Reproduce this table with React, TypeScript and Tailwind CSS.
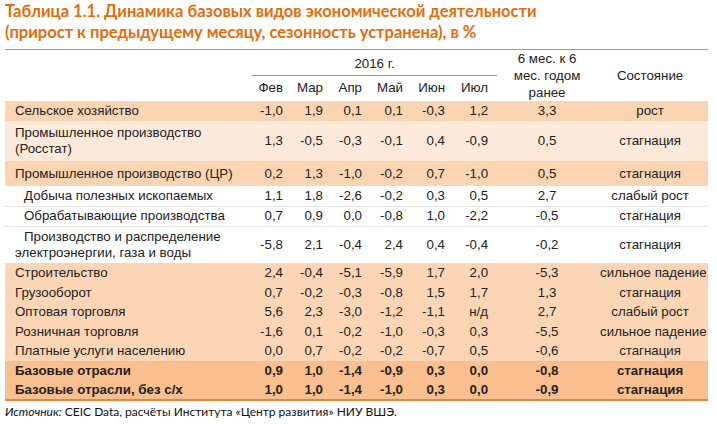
import React from 'react';

type Row = {
  label: string[];
  vals: string[];
  half: string;
  state: string;
  bg: string;
  h: string;
  indent?: boolean;
  bold?: boolean;
  line?: boolean;
};

const rows: Row[] = [
  { label: ['Сельское хозяйство'], vals: ['-1,0', '1,9', '0,1', '0,1', '-0,3', '1,2'], half: '3,3', state: 'рост', bg: 'bg-[#fbd4b2]', h: 'h-[20px]' },
  { label: ['Промышленное производство', '(Росстат)'], vals: ['1,3', '-0,5', '-0,3', '-0,1', '0,4', '-0,9'], half: '0,5', state: 'стагнация', bg: 'bg-[#fde9d9]', h: 'h-[40px]' },
  { label: ['Промышленное производство (ЦР)'], vals: ['0,2', '1,3', '-1,0', '-0,2', '0,7', '-1,0'], half: '0,5', state: 'стагнация', bg: 'bg-[#fbd4b2]', h: 'h-[25px]' },
  { label: ['Добыча полезных ископаемых'], vals: ['1,1', '1,8', '-2,6', '-0,2', '0,3', '0,5'], half: '2,7', state: 'слабый рост', bg: 'bg-white', h: 'h-[20px]', indent: true, line: true },
  { label: ['Обрабатывающие производства'], vals: ['0,7', '0,9', '0,0', '-0,8', '1,0', '-2,2'], half: '-0,5', state: 'стагнация', bg: 'bg-white', h: 'h-[20px]', indent: true, line: true },
  { label: ['Производство и распределение', 'электроэнергии, газа и воды'], vals: ['-5,8', '2,1', '-0,4', '2,4', '0,4', '-0,4'], half: '-0,2', state: 'стагнация', bg: 'bg-white', h: 'h-[37px]', indent: true },
  { label: ['Строительство'], vals: ['2,4', '-0,4', '-5,1', '-5,9', '1,7', '2,0'], half: '-5,3', state: 'сильное падение', bg: 'bg-[#fcd5b4]', h: 'h-[20px]' },
  { label: ['Грузооборот'], vals: ['0,7', '-0,2', '-0,3', '-0,8', '1,5', '1,7'], half: '1,3', state: 'стагнация', bg: 'bg-[#fcd5b4]', h: 'h-[19px]' },
  { label: ['Оптовая торговля'], vals: ['5,6', '2,3', '-3,0', '-1,2', '-1,1', 'н/д'], half: '2,7', state: 'слабый рост', bg: 'bg-[#fcd5b4]', h: 'h-[20px]' },
  { label: ['Розничная торговля'], vals: ['-1,6', '0,1', '-0,2', '-1,0', '-0,3', '0,3'], half: '-5,5', state: 'сильное падение', bg: 'bg-[#fcd5b4]', h: 'h-[19px]' },
  { label: ['Платные услуги населению'], vals: ['0,0', '0,7', '-0,2', '-0,2', '-0,7', '0,5'], half: '-0,6', state: 'стагнация', bg: 'bg-[#fcd5b4]', h: 'h-[20px]' },
  { label: ['Базовые отрасли'], vals: ['0,9', '1,0', '-1,4', '-0,9', '0,3', '0,0'], half: '-0,8', state: 'стагнация', bg: 'bg-[#fabf8f]', h: 'h-[19px]', bold: true },
  { label: ['Базовые отрасли, без с/х'], vals: ['1,0', '1,0', '-1,4', '-1,0', '0,3', '0,0'], half: '-0,9', state: 'стагнация', bg: 'bg-[#fabf8f]', h: 'h-[20px]', bold: true },
];

const months = ['Фев', 'Мар', 'Апр', 'Май', 'Июн', 'Июл'];
const monthW = ['w-[40px]', 'w-[40px]', 'w-[39px]', 'w-[41px]', 'w-[42px]', 'w-[43px]'];

export default function App() {
  return (
    <div className="w-[717px] h-[424px] bg-white overflow-hidden px-[5px] pt-[1px]">
      <div className="font-['Lato',sans-serif] font-bold text-[16.5px] leading-[21px] text-[#e46c0a]">
        <div>Таблица 1.1. Динамика базовых видов экономической деятельности</div>
        <div>(прирост к предыдущему месяцу, сезонность устранена), в %</div>
      </div>

      <table className="mt-[6px] w-[703px] table-fixed border-collapse font-['Liberation_Sans',Arial,sans-serif] text-[13.3px] text-[#222]">
        <colgroup>
          <col className="w-[239px]" />
          {monthW.map((w, i) => (
            <col key={i} className={w} />
          ))}
          <col className="w-[111px]" />
          <col className="w-[108px]" />
        </colgroup>
        <thead>
          <tr className="h-[23px] border-t border-[#e0893c]">
            <th rowSpan={2} />
            <th colSpan={6} className="p-0 font-normal align-bottom">
              <div className="ml-[8px] w-[245px] border-b border-[#e0893c] pb-[3px] text-center leading-[16px]">
                2016 г.
              </div>
            </th>
            <th rowSpan={2} className="p-0 pl-[5px] font-normal text-center leading-[17px] align-middle">
              6 мес. к 6
              <br />
              мес. годом
              <br />
              ранее
            </th>
            <th rowSpan={2} className="p-0 pr-[8px] font-normal text-center align-middle">
              Состояние
            </th>
          </tr>
          <tr className="h-[22px]">
            {months.map((m) => (
              <th key={m} className="p-0 pr-[1px] font-normal text-right align-middle">
                {m}
              </th>
            ))}
          </tr>
        </thead>
        <tbody>
          {rows.map((r, i) => (
            <tr
              key={i}
              className={`${r.bg} ${r.h} ${r.bold ? 'font-bold' : ''} ${r.line ? 'border-b border-[#e6e6e6]' : ''} ${i === rows.length - 1 ? 'border-b-2 border-[#e0893c]' : ''}`}
            >
              <td className={`p-0 pl-[10px] leading-[16px] align-middle whitespace-nowrap ${r.indent ? 'indent-[9px]' : ''}`}>
                {r.label.map((l, j) => (
                  <div key={j} className={j > 0 ? 'indent-0' : ''}>
                    {l}
                  </div>
                ))}
              </td>
              {r.vals.map((v, j) => (
                <td key={j} className="p-0 pr-[1px] text-right align-middle leading-[16px]">
                  {v}
                </td>
              ))}
              <td className="p-0 pl-[5px] text-center align-middle leading-[16px]">{r.half}</td>
              <td className="p-0 pr-[8px] text-center align-middle leading-[16px] whitespace-nowrap">{r.state}</td>
            </tr>
          ))}
        </tbody>
      </table>

      <div className="mt-[3px] font-['Lato',sans-serif] text-[12px] leading-[16px] text-[#111]">
        <span className="italic">Источник:</span> CEIC Data, расчёты Института «Центр развития» НИУ ВШЭ.
      </div>
    </div>
  );
}
